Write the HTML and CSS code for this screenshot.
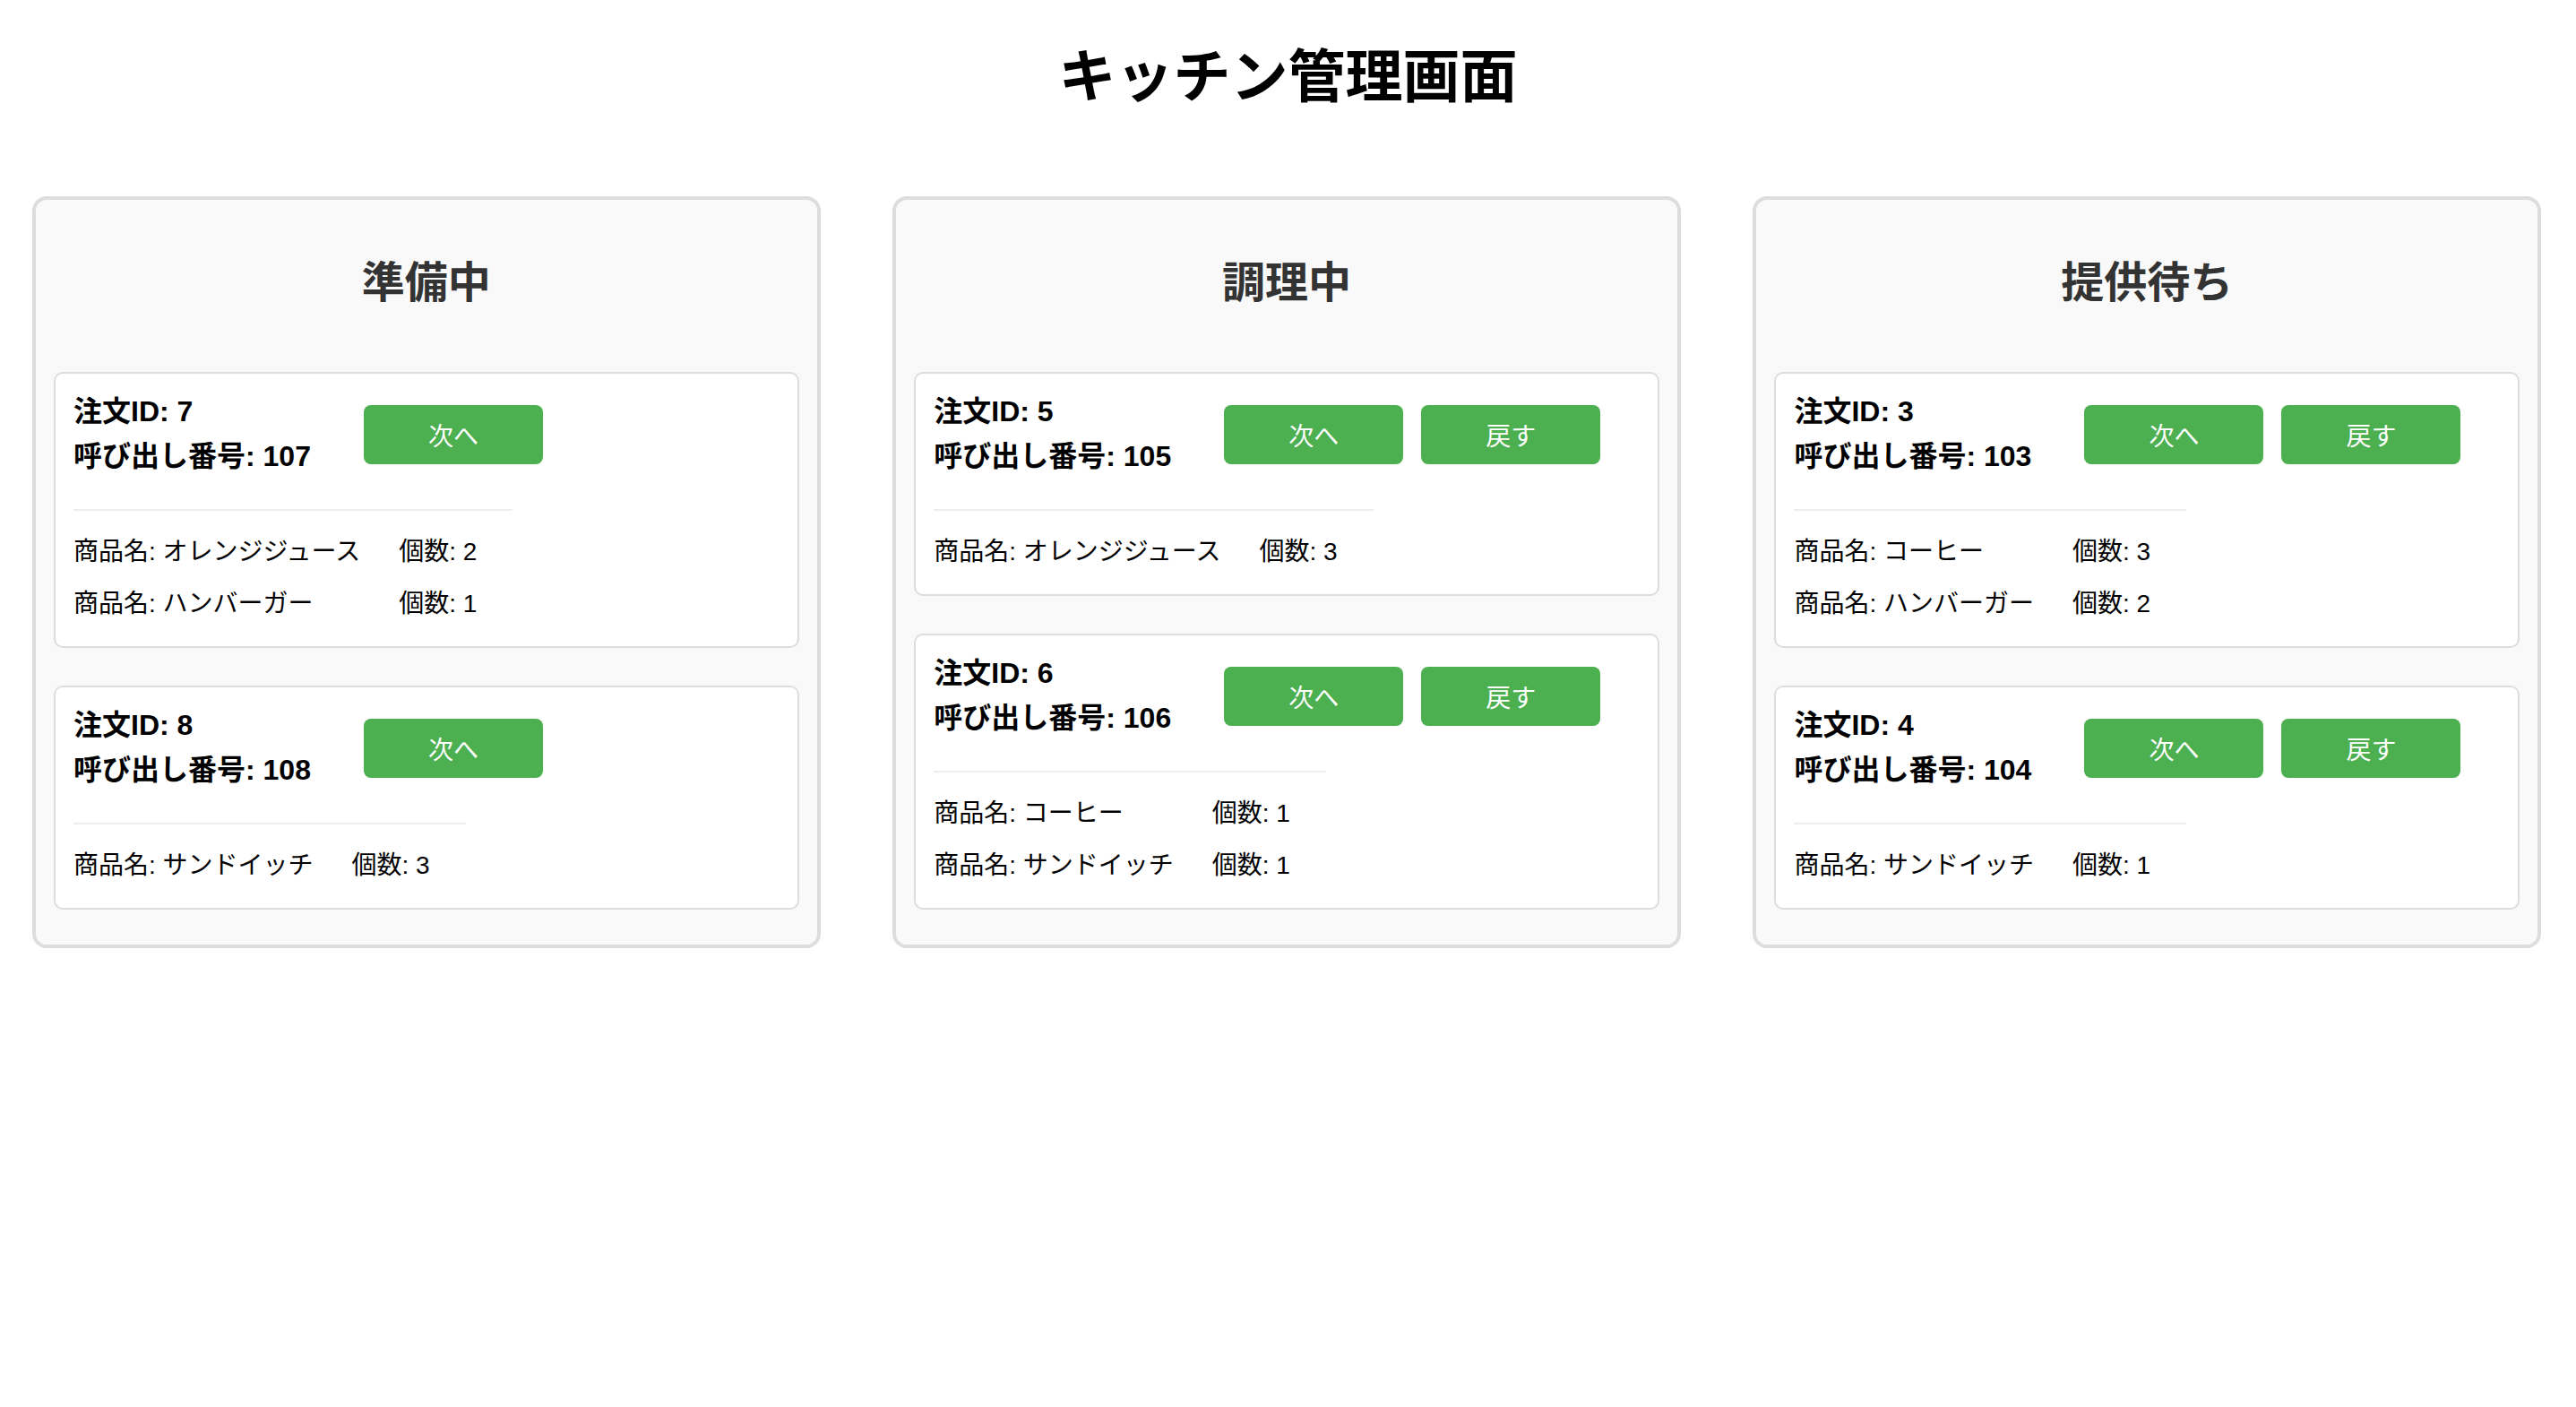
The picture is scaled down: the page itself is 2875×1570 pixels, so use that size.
FILE: index.html
```html
<!DOCTYPE html>
<html lang="ja">
<head>
<meta charset="utf-8">
<title>キッチン管理画面</title>
<link rel="stylesheet" href="styles.css">
</head>
<body>
<h1 class="page-title">キッチン管理画面</h1>
<div class="board">
  <section class="column">
    <h2 class="column-title">準備中</h2>
    <div class="order">
      <div class="order-head">
        <div class="order-info">
          <div class="order-line">注文ID: 7</div>
          <div class="order-line">呼び出し番号: 107</div>
        </div>
        <div class="order-actions">
          <button class="btn">次へ</button>
        </div>
      </div>
      <div class="items">
        <span>商品名: オレンジジュース</span><span>個数: 2</span>
        <span>商品名: ハンバーガー</span><span>個数: 1</span>
      </div>
    </div>
    <div class="order">
      <div class="order-head">
        <div class="order-info">
          <div class="order-line">注文ID: 8</div>
          <div class="order-line">呼び出し番号: 108</div>
        </div>
        <div class="order-actions">
          <button class="btn">次へ</button>
        </div>
      </div>
      <div class="items">
        <span>商品名: サンドイッチ</span><span>個数: 3</span>
      </div>
    </div>
  </section>

  <section class="column">
    <h2 class="column-title">調理中</h2>
    <div class="order">
      <div class="order-head">
        <div class="order-info">
          <div class="order-line">注文ID: 5</div>
          <div class="order-line">呼び出し番号: 105</div>
        </div>
        <div class="order-actions">
          <button class="btn">次へ</button>
          <button class="btn">戻す</button>
        </div>
      </div>
      <div class="items">
        <span>商品名: オレンジジュース</span><span>個数: 3</span>
      </div>
    </div>
    <div class="order">
      <div class="order-head">
        <div class="order-info">
          <div class="order-line">注文ID: 6</div>
          <div class="order-line">呼び出し番号: 106</div>
        </div>
        <div class="order-actions">
          <button class="btn">次へ</button>
          <button class="btn">戻す</button>
        </div>
      </div>
      <div class="items">
        <span>商品名: コーヒー</span><span>個数: 1</span>
        <span>商品名: サンドイッチ</span><span>個数: 1</span>
      </div>
    </div>
  </section>

  <section class="column">
    <h2 class="column-title">提供待ち</h2>
    <div class="order">
      <div class="order-head">
        <div class="order-info">
          <div class="order-line">注文ID: 3</div>
          <div class="order-line">呼び出し番号: 103</div>
        </div>
        <div class="order-actions">
          <button class="btn">次へ</button>
          <button class="btn">戻す</button>
        </div>
      </div>
      <div class="items">
        <span>商品名: コーヒー</span><span>個数: 3</span>
        <span>商品名: ハンバーガー</span><span>個数: 2</span>
      </div>
    </div>
    <div class="order">
      <div class="order-head">
        <div class="order-info">
          <div class="order-line">注文ID: 4</div>
          <div class="order-line">呼び出し番号: 104</div>
        </div>
        <div class="order-actions">
          <button class="btn">次へ</button>
          <button class="btn">戻す</button>
        </div>
      </div>
      <div class="items">
        <span>商品名: サンドイッチ</span><span>個数: 1</span>
      </div>
    </div>
  </section>
</div>
</body>
</html>
```

FILE: styles.css
```css
html, body {
  margin: 0;
  padding: 0;
  background: #ffffff;
}

body {
  font-family: "Liberation Sans", Arial, "Noto Sans CJK JP", sans-serif;
  color: #000000;
}

.page-title {
  margin: 46px 0 0;
  font-size: 64px;
  line-height: 80px;
  font-weight: bold;
  text-align: center;
  color: #000000;
}

.board {
  display: flex;
  gap: 80.7px;
  padding: 0 39px 0 36px;
  margin-top: 93px;
  align-items: flex-start;
}

.column {
  flex: 1 1 0;
  min-width: 0;
  display: flex;
  flex-direction: column;
  background: #f9f9f9;
  border: 4px solid #dddddd;
  border-radius: 16px;
  padding: 20px;
}

.column-title {
  margin: 41px 0 46px;
  font-size: 48px;
  line-height: 64px;
  font-weight: bold;
  text-align: center;
  color: #333333;
}

.order {
  background: #ffffff;
  border: 2px solid #dddddd;
  border-radius: 10px;
  padding: 16.6px 20px 18px;
  margin: 21px 0 19px;
}

.order + .order {
  margin-top: 23px;
}

.order-head {
  display: flex;
  align-items: flex-start;
  margin-bottom: 34.6px;
}

.order-info {
  flex: 0 0 324px;
}

.order-line {
  font-size: 32px;
  line-height: 50px;
  font-weight: bold;
  white-space: nowrap;
}

.order-actions {
  display: flex;
  gap: 20px;
  margin-top: 18px;
}

.btn {
  width: 200px;
  height: 66px;
  padding: 0;
  border: none;
  border-radius: 8px;
  background: #4caf50;
  color: #ffffff;
  font-family: "Liberation Sans", Arial, "Noto Sans CJK JP", sans-serif;
  font-size: 28px;
  cursor: pointer;
}

.items {
  display: grid;
  grid-template-columns: auto auto;
  column-gap: 43px;
  width: max-content;
  padding: 17px 40px 0 0;
  border-top: 2px solid #eeeeee;
  font-size: 28px;
  line-height: 58px;
  white-space: nowrap;
}
```
